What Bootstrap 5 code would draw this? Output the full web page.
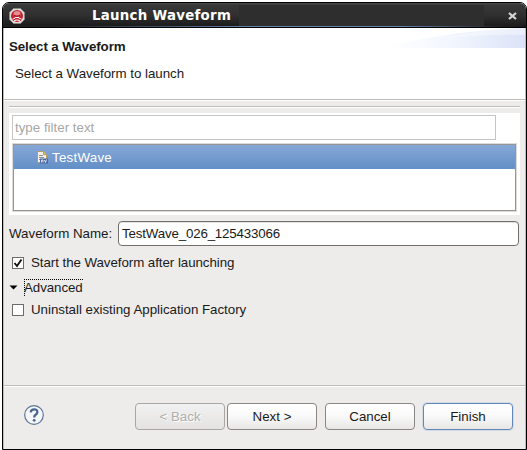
<!DOCTYPE html>
<html lang="en">
<head>
<meta charset="utf-8">
<title>Launch Waveform</title>
<meta name="viewport" content="width=device-width, initial-scale=1">
<link href="https://cdn.jsdelivr.net/npm/bootstrap@5.3.0/dist/css/bootstrap.min.css" rel="stylesheet">
<style>
html,body{height:450px;overflow:hidden}
body{background:#fff;font:13.33px/16px "Liberation Sans",Arial,sans-serif;color:#1a1a1a;padding:2px 0 0 2px}
.win{width:525px;height:448px;border:1px solid #000;border-radius:7px 7px 0 0;background:#edeceb;overflow:hidden}
.titlebar{height:25px;background:linear-gradient(#4b4b4b 0,#383838 2px,#303030 12px,#1c1c1c 23px,#111 100%)}
.titlebar .mid{left:236px;right:42px;top:2px;bottom:2px;background:#2e2e2e}
.titlebar .glow{left:0;right:0;bottom:1px;height:1px;background:linear-gradient(90deg,#222 10%,#6684ad 48%,#6684ad 76%,#1c1c1c 96%)}
.titlebar .edge{left:0;right:0;bottom:0;height:1px;background:#000}
.app-icon{left:5px;top:4px}
.title-text{left:89px;top:5px;font:bold 13.33px/16px "DejaVu Sans",sans-serif;color:#fff;white-space:nowrap}
.close-x{right:9px;top:9px}
.client{height:421px;border:solid #bdbcbb;border-width:0 1px}
.banner{height:71px;background:#fff;padding:11px 5px 0}
.swoosh{right:0;top:0}
.banner h1{font-size:13.33px;line-height:16px;font-weight:bold;margin:0}
.banner p{margin:11px 0 0 6px}
.rule{height:2px;border-top:1px solid #bdbcba;border-bottom:1px solid #fff;flex:none}
.rule.upper{margin:5px 5px 0}
.tree-panel{margin:5px 5px 0;height:102px;padding:2px 3px;background:#fff}
.filter-box{width:484px;height:25px;border:1px solid #c6c5c4;padding:0 2px;color:#a9a7a5;background:#fff}
.tree-frame{margin-top:3px;height:69px;width:505px;border:1px solid #dcdbda;background:#fff}
.tree-in{height:67px;border:1px solid #979593}
.tree-row{height:24px;background:linear-gradient(#87a8d8,#628fc6);color:#fff;padding:1px 0 0 22px}
.name-row{height:25px;margin:6px 6px 0 5px}
.name-box{height:25px;width:401px;border:1px solid #72706e;border-radius:4px;background:#fff;padding-left:3px;box-shadow:inset 0 1px 0 #e2e1e0}
.check-row{height:16px;padding-left:8px}
.check-row.first{margin-top:9px}
.check-row.second{margin-top:6px}
.chk{width:12px;height:12px;border:1px solid #6e6c6a;background:#fff;margin-right:7px}
.adv{margin:8px 0 0 5px;height:17px}
.adv-label{border-top:1px dotted #000;border-left:1px dotted #000;height:17px;width:59px;line-height:16px;margin-left:6px}
.adv-label .t{margin-left:-1px}
.footer-bar{height:62px;padding:16px 12px 0 20px}
.help-icon{margin-top:2px}
.btn-group-a{gap:2px}
.btn.wb{width:90px;height:27px;padding:0;font-size:13.33px;line-height:25px;border:1px solid #8a8684;border-radius:4px;background:linear-gradient(#fff,#fafafa 45%,#e8e7e6);color:#1a1a1a}
.btn.wb:disabled{opacity:1;color:#b0aeac;border-color:#a9a6a4;background:linear-gradient(#f2f1f1,#e4e3e2);text-shadow:1px 1px #fff}
.btn.wb.primary{border-color:#6487b5;box-shadow:0 0 0 1px #d1dbe8}
.t{white-space:nowrap;display:inline-block}
.t0{letter-spacing:.28px}
.t1{letter-spacing:-.09px}
.t2{letter-spacing:-.03px}
.t4{letter-spacing:.25px}
.t6{letter-spacing:-.17px}
.t7{letter-spacing:-.06px}
.t8{letter-spacing:-.08px}
.t9{letter-spacing:-.03px}
</style>
<script src="https://cdn.jsdelivr.net/npm/bootstrap@5.3.0/dist/js/bootstrap.bundle.min.js"></script>
</head>
<body>
<div class="win">
  <div class="titlebar position-relative">
    <div class="mid position-absolute"></div>
    <div class="glow position-absolute"></div>
    <div class="edge position-absolute"></div>
    <svg class="app-icon position-absolute" width="18" height="18" viewBox="0 0 18 18"><path d="M5.500 1.500h7L16.500 5.500v7L12.500 16.500h-7L1.500 12.500v-7z" fill="#dedbd9" stroke="#8a8886"/><circle cx="9" cy="9" r="6" fill="#c5202d"/><ellipse cx="9" cy="7" rx="3.500" ry="3" fill="#e58f94"/><path d="M6 7.500q3 2 6 0v1.500q-3 2-6 0z" fill="#b3121f"/><path d="M4.500 12q2 0 3-1.500h3q1 1.500 3 1.500M6 14q3-2 6 0" fill="none" stroke="#fff" stroke-width="1.100"/></svg>
    <span class="title-text position-absolute"><span class="t t0">Launch Waveform</span></span>
    <svg class="close-x position-absolute" width="9" height="8" viewBox="0 0 9 8"><path d="M1 1l7 6M8 1l-7 6" stroke="#d6d6d6" stroke-width="2.300"/></svg>
  </div>
  <div class="client d-flex flex-column">
    <div class="banner position-relative flex-shrink-0">
      <svg class="swoosh position-absolute" width="142" height="20" viewBox="0 0 142 20"><defs><linearGradient id="g"><stop offset="0" stop-color="#fff"/><stop offset=".45" stop-color="#f3f7fe"/><stop offset="1" stop-color="#dbe3f7"/></linearGradient></defs><path d="M0 20Q60 3 142 0V20z" fill="url(#g)"/><path d="M60 11Q95 1 142 0V7Q100 6 60 11z" fill="#fff" opacity=".4"/></svg>
      <h1><span class="t t1">Select a Waveform</span></h1>
      <p><span class="t t2">Select a Waveform to launch</span></p>
    </div>
    <div class="rule"></div>
    <div class="rule upper"></div>
    <div class="tree-panel flex-shrink-0">
      <div class="filter-box d-flex align-items-center"><span class="t">type filter text</span></div>
      <div class="tree-frame"><div class="tree-in"><div class="tree-row d-flex align-items-center">
        <svg width="12" height="13" viewBox="0 0 12 13"><path d="M1.500.5h6l3 3v8h-9z" fill="#f4f0e6" stroke="#b59c60"/><path d="M7.500.5v3h3" fill="#dcc27c" stroke="#b59c60"/><path d="M3 4.500h4M3 6.500h5M3 8.500h2" stroke="#8c9099"/><rect x="4" y="7.500" width="8" height="5" fill="#47699f"/><path d="M5.500 11.500v-2.500h1.500v2.500M8.500 9l1 2.500L10.500 8.500" fill="none" stroke="#e6edf7" stroke-width=".9"/></svg>
        <span class="t t4 ms-1">TestWave</span></div></div></div>
    </div>
    <div class="name-row d-flex align-items-center justify-content-between flex-shrink-0"><span class="t">Waveform Name:</span><div class="name-box d-flex align-items-center"><span class="t t6">TestWave_026_125433066</span></div></div>
    <div class="check-row first d-flex align-items-center flex-shrink-0"><div class="chk"><svg class="d-block" width="10" height="10" viewBox="0 0 10 10"><path d="M1.500 5L4 8 8.500 1.500" fill="none" stroke="#111" stroke-width="1.900"/></svg></div><span class="t t7">Start the Waveform after launching</span></div>
    <div class="adv d-flex align-items-center flex-shrink-0"><svg width="9" height="5" viewBox="0 0 9 5"><path d="M.5.5h8L4.500 4.500z" fill="#000"/></svg><div class="adv-label"><span class="t t8">Advanced</span></div></div>
    <div class="check-row second d-flex align-items-center flex-shrink-0"><div class="chk"></div><span class="t t9">Uninstall existing Application Factory</span></div>
    <div class="rule mt-auto"></div>
    <div class="footer-bar d-flex align-items-start flex-shrink-0">
      <svg class="help-icon" width="20" height="20" viewBox="0 0 20 20"><circle cx="10" cy="10" r="9.300" fill="#f5f6f8" stroke="#5b7598" stroke-width="1.200"/><path d="M6.700 7.300Q7 4.300 10.200 4.300T13.300 7.200Q13.300 8.600 11.600 9.700Q10.200 10.600 10.200 12.500" fill="none" stroke="#4a668d" stroke-width="2.300"/><circle cx="10.200" cy="15.300" r="1.400" fill="#4a668d"/></svg>
      <div class="d-flex ms-auto gap-2"><div class="btn-group-a d-flex"><button class="btn wb" disabled><span class="t">&lt; Back</span></button><button class="btn wb"><span class="t">Next &gt;</span></button></div><button class="btn wb"><span class="t">Cancel</span></button><button class="btn wb primary"><span class="t">Finish</span></button></div>
    </div>
  </div>
</div>
</body>
</html>
